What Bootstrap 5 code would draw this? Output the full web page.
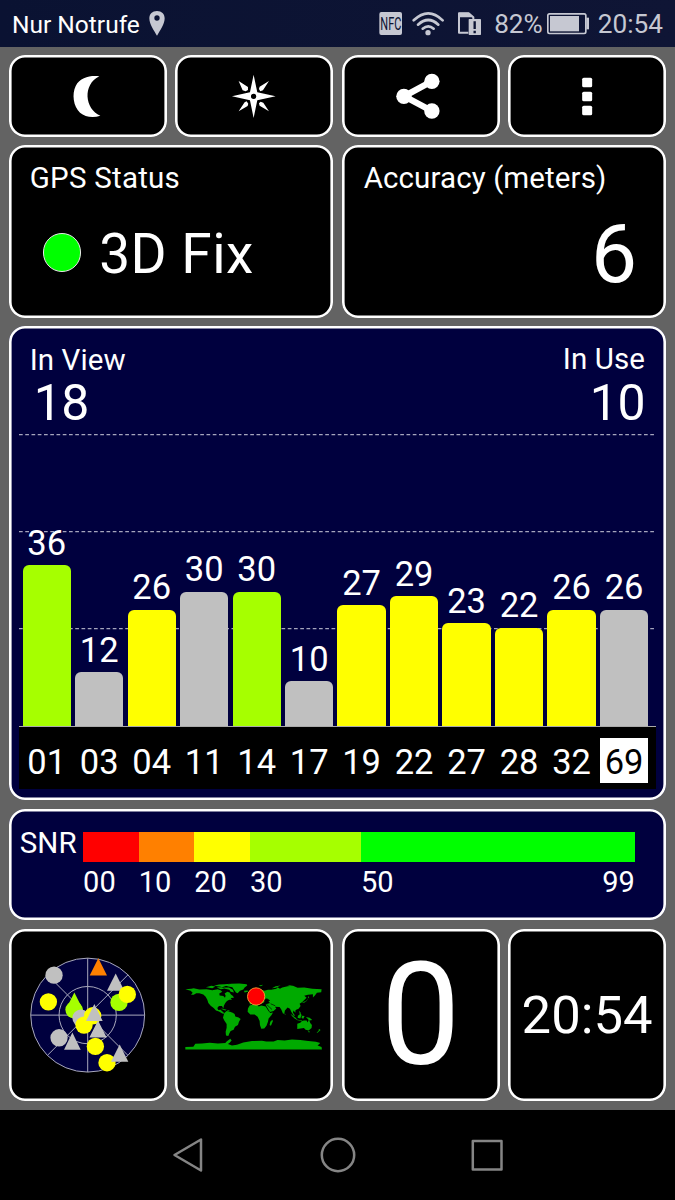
<!DOCTYPE html>
<html lang="de">
<head>
<meta charset="utf-8">
<meta name="viewport" content="width=device-width, initial-scale=1">
<title>GPS Status</title>
<link href="https://cdn.jsdelivr.net/npm/bootstrap@5.3.0/dist/css/bootstrap.min.css" rel="stylesheet">
<style>
body{font-family:Roboto,"Liberation Sans",sans-serif;background:#636363;color:#fff;width:675px;height:1200px;overflow:hidden}
svg{display:block;flex:none}
.statusbar{height:47px;background:linear-gradient(90deg,#0a1232,#0f1535);font-size:24.5px;line-height:47px;padding:1px 12px 0 12px;white-space:nowrap}
.statusbar .sys{color:#c6c8d2;font-size:26.2px}
.dash{padding:8px 9px 9px 8.7px;height:1063px;gap:8.7px}
.tiles{display:grid;grid-template-columns:repeat(4,1fr);gap:8.7px}
.tiles.halves{grid-template-columns:1fr 1fr}
.tile{background:#000;border-radius:16px;box-shadow:inset 0 0 0 2.6px #fff;overflow:hidden;color:#fff}
.tile svg{width:100%;height:100%}
.navy{background:#00003e}
.h-tool{height:81.7px}.h-tall{height:172.4px}.h-chart{height:473.4px}.h-snr{height:111.3px}
.cap{font-size:29.5px;line-height:36px;letter-spacing:.1px}
.led{width:38.5px;height:38.5px;border-radius:50%;background:#0f0;border:1.5px solid #e8e8e8}
.fix{font-size:55px;line-height:60px;letter-spacing:.5px}
.acc{font-size:82px;line-height:84px}
.count{font-size:50px;line-height:50px}
.plot{height:292px;margin:0 10.5px;padding-left:3.4px;gap:4.2px}
.plot .gridlines{left:0;top:0;width:636px;height:293px}
.sat{width:48.3px;z-index:1}
.num{font-size:34.5px;line-height:40px;text-align:center}
.sat .num{padding-bottom:2.5px}
.column{border-radius:6px 6px 0 0}
.c-lime{background:#a6ff00}.c-yellow{background:#ff0}.c-gray{background:#c0c0c0}.c-red{background:#f00}.c-orange{background:#ff8000}.c-green{background:#0f0}
.ids{height:63px;margin:0 10.5px;padding:11.5px 0 0 3.4px;gap:4.2px;background:#000;border-top:1.5px solid #aaa}
.ids .num{width:48.3px;height:45px;line-height:48px}
.ids .hot{background:#fff;color:#000}
.scale{width:552px}
.scale .seg{height:30px}
.zero{font-size:142px;line-height:173px}
.time{font-size:52.6px;line-height:172px}
.navbar-soft{height:90px;background:#000;gap:113.7px}
</style>
</head>
<body>
<header class="statusbar d-flex align-items-center">
  <span>Nur Notrufe</span>
  <svg width="16" height="47" viewBox="447 3 48 141" style="margin-left:9px"><path fill="#c6c8d2" fill-rule="evenodd" d="M471 33c-14 0-23 9-23 22 0 17 14 37 23 52 9-15 23-35 23-52 0-13-9-22-23-22zm0 13a8 8 0 1 1 0 16 8 8 0 0 1 0-16z"/></svg>
  <div class="sys d-flex ms-auto">
    <svg width="103" height="47" viewBox="132 3 309 141" style="margin-right:12px">
      <rect x="133" y="36" width="68" height="69" rx="6" fill="#c6c8d2"/>
      <text x="136" y="90" font-size="54" textLength="63" lengthAdjust="spacingAndGlyphs" fill="#0c1434">NFC</text>
      <g fill="none" stroke="#c6c8d2" stroke-width="8" stroke-linecap="round"><path d="M236 61Q280 19 323 61"/><path d="M249 74Q280 46 310 74"/><path d="M263 86Q280 72 296 86"/></g>
      <circle cx="279" cy="98" r="8" fill="#c6c8d2"/>
      <path d="M400 98H372V40H401L415 52V60" fill="none" stroke="#c6c8d2" stroke-width="6" stroke-linejoin="round"/>
      <path d="M371 38h30l15 14H371z" fill="#c6c8d2"/>
      <rect x="401" y="57" width="37" height="48" rx="2" fill="#c6c8d2"/><path d="M419 64v23M419 92v8" stroke="#0c1434" stroke-width="7"/>
    </svg>
    <span>82%</span>
    <svg width="42" height="47" viewBox="636 3 126 141" style="margin:0 9px 0 4px"><rect x="638.500" y="41.500" width="114" height="59" rx="5" fill="none" stroke="#c6c8d2" stroke-width="5"/><rect x="645" y="48" width="87" height="46" fill="#c6c8d2"/><path d="M754 53h8v35h-8z" fill="#c6c8d2"/></svg>
    <span>20:54</span>
  </div>
</header>

<main class="dash d-flex flex-column">
  <div class="tiles h-tool">
    <button class="tile border-0 p-0"><svg viewBox="26.1 165 473.1 245.1"><path fill="#fff" d="M297 229C269 226 240 232 226 258C214 282 219 320 239 338C254 351 278 354 300 347C253 328 246 253 297 229z"/></svg></button>
    <button class="tile border-0 p-0"><svg viewBox="525.3 165 473.1 245.1"><path fill="#fff" fill-rule="evenodd" d="M761 224L772 277 827 289 772 301 761 354 750 301 696 289 750 277zM761 281a8 8 0 1 0 0 16 8 8 0 0 0 0-16z"/><path fill="#fff" d="M716 243l28 18v9l-7 4-9-3zM807 243l-18 28-8 3-4-7 2-7zM716 334l18-27 6-3 5 7-2 7zM807 334l-28-17-2-7 5-5 8 3z"/></svg></button>
    <button class="tile border-0 p-0"><svg viewBox="19.5 165 473.1 245.1"><path d="M289 244L206 289L289 333" fill="none" stroke="#fff" stroke-width="19"/><g fill="#fff"><circle cx="289" cy="244" r="23"/><circle cx="205" cy="289" r="23"/><circle cx="289" cy="333" r="23"/></g></svg></button>
    <button class="tile border-0 p-0"><svg viewBox="518.7 165 473.1 245.1"><g fill="#fff"><rect x="741" y="233" width="30" height="29" rx="5"/><rect x="741" y="275" width="30" height="29" rx="5"/><rect x="741" y="317" width="30" height="29" rx="5"/></g></svg></button>
  </div>

  <div class="tiles halves h-tall">
    <section class="tile">
      <div class="cap" style="padding:15px 0 0 21px;letter-spacing:.25px">GPS Status</div>
      <div class="d-flex align-items-start" style="padding:26px 0 0 34px"><span class="led" style="margin-top:11px"></span><span class="fix" style="margin:2px 0 0 18px">3D Fix</span></div>
    </section>
    <section class="tile">
      <div class="cap" style="padding:15px 0 0 22px">Accuracy (meters)</div>
      <div class="acc text-end" style="padding:15.500px 29px 0 0">6</div>
    </section>
  </div>

  <section class="tile navy h-chart">
    <div class="d-flex justify-content-between" style="height:107.3px;padding:15px 21px 0 21px">
      <div><div class="cap" style="padding-top:1px">In View</div><div class="count ps-1" style="letter-spacing:-.5px">18</div></div>
      <div class="text-end"><div class="cap">In Use</div><div class="count" style="margin-top:1px;letter-spacing:-.5px">10</div></div>
    </div>
    <div class="plot d-flex align-items-end position-relative" id="plot">
      <svg class="gridlines position-absolute" viewBox="0 0 636 293"><g stroke="#a5a5bd" stroke-width="1.300" stroke-dasharray="3.700 2.550"><path d="M0 .5H636M0 97.700H636M0 194.700H636"/></g></svg>
    </div>
    <div class="ids d-flex" id="ids"></div>
  </section>

  <section class="tile navy h-snr d-flex">
    <div class="cap" style="padding:16.500px 0 0 11px;width:74.3px">SNR</div>
    <div class="scale" style="padding-top:23px">
      <div class="d-flex"><div class="seg c-red" style="width:55.7px"></div><div class="seg c-orange" style="width:55.5px"></div><div class="seg c-yellow" style="width:55.8px"></div><div class="seg c-lime" style="width:111px"></div><div class="seg c-green flex-fill"></div></div>
      <div class="cap d-flex" style="padding-top:2px;font-size:29px"><span style="width:55.7px">00</span><span style="width:55.5px">10</span><span style="width:55.8px">20</span><span style="width:111px">30</span><span>50</span><span class="ms-auto">99</span></div>
    </div>
  </section>

  <div class="tiles h-tall">
    <section class="tile"><svg viewBox="11.1 10.5 473.1 517.5">
      <g stroke="#a9a9bd" stroke-width="3"><circle cx="247" cy="269" r="171" fill="#00003e"/><circle cx="247" cy="269" r="86" fill="none"/><path d="M247 98V440M76 269H418M126 148L368 390M126 390L368 148"/></g>
      <path fill="#ff8000" d="M279 98l26 52h-52z"/>
      <circle cx="146" cy="149" r="26" fill="silver"/><circle cx="129" cy="229" r="26" fill="#ff0"/>
      <circle cx="341" cy="231" r="26" fill="#a6ff00"/><path fill="silver" d="M331 144l26 52h-52z"/><circle cx="366" cy="207" r="26" fill="#ff0"/>
      <circle cx="206" cy="253" r="26" fill="#a6ff00"/><path fill="#a6ff00" d="M207 201l26 52h-52z"/>
      <circle cx="227" cy="278" r="26" fill="silver"/><circle cx="262" cy="271" r="26" fill="#ff0"/><circle cx="236" cy="299" r="26" fill="#ff0"/>
      <path fill="silver" d="M267 236l25 51h-50zM278 285l26 51h-52zM201 321l25 52h-50z"/>
      <circle cx="161" cy="337" r="26" fill="silver"/><circle cx="270" cy="363" r="26" fill="#ff0"/><circle cx="305" cy="412" r="26" fill="#ff0"/><path fill="silver" d="M343 357l26 52h-52z"/>
    </svg></section>
    <section class="tile"><svg viewBox="9.3 -94.5 473.1 517.5">
      <g fill="#00aa00">
        <path d="M40 86L58 85 65 83 82 87 104 86 121 89 137 86 146 89 151 94 142 99 143 105 154 107 159 112 161 106 158 99 166 94 173 96 177 102 183 107 186 112 176 113 180 118 172 118 165 122 160 128 156 135 154 144 150 137 141 137 136 143 139 149 147 148 149 152 154 155 157 160 151 159 141 153 132 150 125 143 116 136 109 128 106 118 101 109 94 102 82 98 73 98 65 103 57 103 62 97 56 91z"/>
        <path d="M102 80l16-4 12 2-9 5zM126 76l15-4 17-1 16-1-11 6-12 4-8-2zM134 80h15l9 5-12 1zM153 81l18 0 12 7 3 8-10-2-4-6-13-3z"/>
        <path d="M158 74L177 70 202 69 224 71 226 75 218 81 214 87 204 91 197 98 192 96 187 89 181 80 169 78zM216 91l11-1 1 4-10 2zM149 144l15 4-4 2-12-4zM166 149l8 2-7 2z"/>
        <path d="M157 158L164 152 174 154 182 157 188 161 190 168 200 171 206 176 201 184 198 194 189 199 185 208 176 212 172 219 169 227 162 225 161 214 164 202 164 191 157 180 153 172z"/>
        <path d="M239 99L249 90 261 85 277 91 288 88 298 88 313 85 317 80 324 85 331 81 347 77 363 76 377 82 397 81 421 85 449 86 448 95 435 97 429 105 423 111 423 101 408 103 397 106 404 112 391 125 383 130 386 137 380 145 371 149 370 157 365 150 363 156 369 165 366 167 358 154 354 145 347 141 339 150 337 160 333 159 328 147 323 140 309 139 313 144 305 152 294 155 285 140 281 132 287 130 294 128 289 122 279 120 275 127 267 130 256 124 243 129 234 132 232 123 245 119 239 113z"/>
        <path d="M229 102l5-6 5 4 4 7-9 2-3-3zM260 75l14-2-7 4zM300 83l11-6 15-2-14 7zM346 76l8-2 11 3z"/>
        <path d="M233 135L244 132 255 131 260 138 268 135 281 138 289 151 295 158 303 156 299 164 290 174 288 184 284 195 277 204 268 205 264 194 263 182 257 169 248 162 235 162 227 154 228 144z"/>
        <path d="M295 184l6-6 2 4-6 14-4-2zM389 128l9-2 7-5 3-8-5 9-7 2zM409 106l3 8-4-3zM382 151l4 5 1 8-4-4zM356 160l16 13 4 5-7-3-9-8zM378 166l8-7 3 5-4 10-8-2zM373 177l18 3-2 2-15-3zM390 166l8 1-4 8-5-2zM402 170l11 2 8 7-9 1zM338 158l3 4-2 2z"/>
        <path d="M376 190L385 187 390 182 396 180 404 180 407 186 411 177 415 188 420 194 419 203 410 210 401 208 396 203 386 204 376 206zM408 213l5-1-1 5zM441 205l5 4-9 8-3 0 6-6z"/>
        <path d="M40 260L64 259 70 250 90 249 113 247 138 249 160 248 164 243 175 235 179 240 173 247 168 251 180 255 195 253 214 246 240 242 270 241 283 243 305 243 317 239 338 240 360 237 385 239 409 242 432 244 445 248 437 255 449 260 450 267H40z"/>
      </g>
      <path d="M275 118l10-3 8 5-10 3zM284 132l16 15M310 136l-14-6" fill="#000" stroke="#000" stroke-width="2"/>
      <circle cx="252.500" cy="108" r="26" fill="#f00" stroke="#ffab38" stroke-width="2.500"/>
    </svg></section>
    <section class="tile zero text-center">0</section>
    <section class="tile time text-center">20:54</section>
  </div>
</main>

<nav class="navbar-soft d-flex justify-content-center align-items-center">
  <svg width="36" height="36" viewBox="0 0 36 36" fill="none" stroke="#858585" stroke-width="2.500" stroke-linejoin="round"><path d="M4.500 18L31 2.500V33.500z"/></svg>
  <svg width="36" height="36" viewBox="0 0 36 36" fill="none" stroke="#858585" stroke-width="2.500"><circle cx="18" cy="18" r="16.200"/></svg>
  <svg width="36" height="36" viewBox="0 0 36 36" fill="none" stroke="#858585" stroke-width="2.500" stroke-linejoin="round"><path d="M3.800 4H32.500V32.500H3.800z"/></svg>
</nav>

<script src="https://cdn.jsdelivr.net/npm/bootstrap@5.3.0/dist/js/bootstrap.bundle.min.js"></script>
<script>
const sats=[['01',36,'lime'],['03',12,'gray'],['04',26,'yellow'],['11',30,'gray'],['14',30,'lime'],['17',10,'gray'],['19',27,'yellow'],['22',29,'yellow'],['27',23,'yellow'],['28',22,'yellow'],['32',26,'yellow'],['69',26,'gray']];
const plot=document.getElementById('plot'),ids=document.getElementById('ids');
for(const [id,snr,color] of sats){
  plot.insertAdjacentHTML('beforeend',`<div class="sat"><div class="num">${snr}</div><div class="column c-${color}" style="height:${snr*4.46}px"></div></div>`);
  ids.insertAdjacentHTML('beforeend',`<div class="num${id==='69'?' hot':''}">${id}</div>`);
}
</script>
</body>
</html>
